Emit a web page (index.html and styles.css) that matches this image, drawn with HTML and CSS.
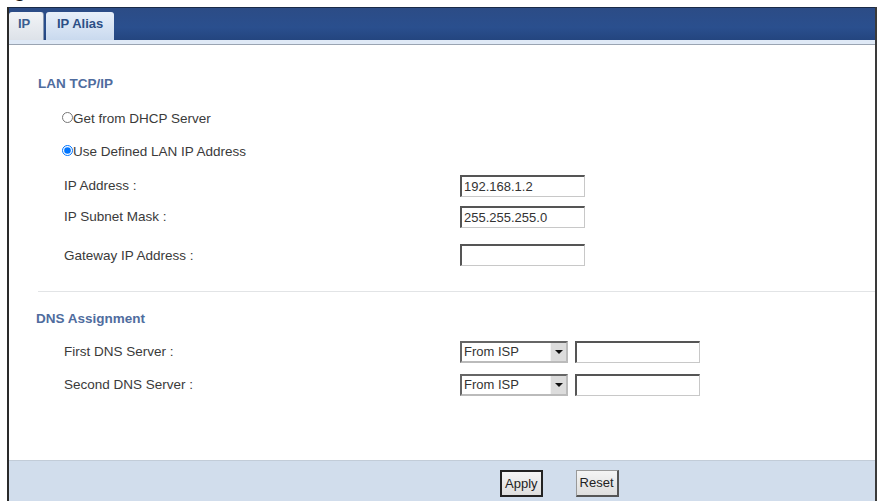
FILE: index.html
```html
<!DOCTYPE html>
<html lang="en">
<head>
  <meta charset="UTF-8" />
  <title>LAN - IP</title>
  <link rel="stylesheet" href="styles.css">
</head>
<body>
  <div class="caption">Figure 47 Network &gt; LAN &gt; IP</div>

  <div class="panel">
    <div class="tabbar">
      <a href="#" class="tab active">IP</a>
      <a href="#" class="tab">IP Alias</a>
    </div>
    <div class="tab-strip"></div>

    <form class="content">
      <h3 class="section-title">LAN TCP/IP</h3>
      <div class="row radio-row">
        <label><input type="radio" name="lanip" value="dhcp">Get from DHCP Server</label>
      </div>
      <div class="row radio-row">
        <label><input type="radio" name="lanip" value="static" checked>Use Defined LAN IP Address</label>
      </div>
      <div class="row field-row ip">
        <span class="label">IP Address :</span>
        <input type="text" class="text-box" value="192.168.1.2">
      </div>
      <div class="row field-row">
        <span class="label">IP Subnet Mask :</span>
        <input type="text" class="text-box" value="255.255.255.0">
      </div>
      <div class="row field-row gateway">
        <span class="label">Gateway IP Address :</span>
        <input type="text" class="text-box" value="">
      </div>

      <hr class="divider">

      <h3 class="section-title dns">DNS Assignment</h3>
      <div class="row field-row dns-row">
        <span class="label">First DNS Server :</span>
        <div class="select-box"><span>From ISP</span><i class="arrow"></i></div>
        <input type="text" class="text-box dns-box" value="">
      </div>
      <div class="row field-row dns-row">
        <span class="label">Second DNS Server :</span>
        <div class="select-box"><span>From ISP</span><i class="arrow"></i></div>
        <input type="text" class="text-box dns-box" value="">
      </div>
    </form>

    <div class="footer">
      <button type="button" class="btn apply">Apply</button>
      <button type="button" class="btn">Reset</button>
    </div>
  </div>
</body>
</html>
```

FILE: styles.css
```css
body {
  margin: 0;
  padding: 0;
  background-color: #ffffff;
  font-family: Arial, "Liberation Sans", sans-serif;
  overflow: hidden;
}

/* figure caption, sits mostly above the page edge */
.caption {
  height: 7px;
  margin-left: -4px;
  font-size: 20px;
  line-height: 7px;
  font-weight: bold;
  color: #111;
  position: relative;
  top: -13px;
}

.panel {
  margin-left: 7px;
  width: 866px;
  height: 494px;
  border-left: 2px solid #2a2a2a;
  border-right: 2px solid #3a3a3a;
  display: flex;
  flex-direction: column;
}

/* dark blue tab header */
.tabbar {
  height: 32px;
  border-top: 1px solid #1a2a48;
  background: linear-gradient(#2c4c86, #2a4f8e 60%, #24457f);
  display: flex;
  align-items: flex-end;
  gap: 2px;
}

.tab {
  height: 28px;
  padding: 0 11px;
  font-size: 13px;
  font-weight: bold;
  line-height: 24px;
  color: #2c4f86;
  text-decoration: none;
  border-radius: 3px 3px 0 0;
  background: linear-gradient(#e8f0fa, #c9d9ee);
}

.tab.active {
  width: 15px;
  padding: 0 10px 0 9px;
  background: linear-gradient(#f2f4f7, #dde2e9);
  color: #3b5d90;
  border-right: 1px solid #8898b0;
}

.tab-strip {
  height: 4px;
  background: #dfe9f6;
  border-bottom: 1px solid #9aa4b2;
}

.content {
  flex: 1;
  padding: 31px 0 0 29px;
  font-size: 13.5px;
  color: #3a3a3a;
}

.section-title {
  margin: 0 0 11px 0;
  font-size: 13.5px;
  font-weight: bold;
  color: #4f6c9e;
}

.section-title.dns {
  margin: 19px 0 9px -2px;
}

.row {
  display: flex;
  align-items: center;
  padding-left: 26px;
}

.radio-row {
  height: 33px;
}

.radio-row input {
  margin: 0 0 0 -2px;
  width: 11px;
  height: 11px;
}

.field-row {
  height: 31px;
}

.field-row.ip {
  margin-top: 2px;
}

.field-row.gateway {
  height: 44px;
  padding-top: 2px;
  box-sizing: border-box;
}

.field-row.dns-row {
  height: 33px;
}

.label {
  width: 396px;
}

.text-box {
  width: 118px;
  height: 17px;
  padding: 1px 2px;
  font-family: Arial, "Liberation Sans", sans-serif;
  font-size: 13px;
  color: #333;
  border: 1px solid #c8c8c8;
  border-top: 2px solid #555;
  border-left: 2px solid #555;
}

.divider {
  margin: 15px 0 0 0;
  border: 0;
  border-top: 1px solid #e2e4e6;
}

.select-box {
  width: 108px;
  height: 22px;
  border: 2px solid #666;
  border-right-color: #bbb;
  border-bottom-color: #bbb;
  display: flex;
  align-items: center;
  justify-content: space-between;
  font-size: 13px;
  color: #333;
  padding-left: 2px;
  margin-right: 7px;
  box-sizing: border-box;
}

.arrow {
  width: 15px;
  height: 18px;
  background: #dcdcdc;
  border-left: 1px solid #f4f4f4;
  position: relative;
}

.arrow::after {
  content: "";
  position: absolute;
  left: 4px;
  top: 7px;
  border-left: 4px solid transparent;
  border-right: 4px solid transparent;
  border-top: 4px solid #111;
}

.dns-box {
  width: 118px;
}

.footer {
  height: 40px;
  border-top: 1px solid #c2ccd8;
  background: #d1ddec;
  display: flex;
  align-items: center;
  padding-left: 491px;
  gap: 33px;
}

.btn {
  height: 27px;
  padding: 0 3px;
  margin-top: 4px;
  font-family: Arial, "Liberation Sans", sans-serif;
  font-size: 13px;
  color: #222;
  background: linear-gradient(#f4f4f4, #dedede);
  border: 1px solid #999;
  border-right: 2px solid #555;
  border-bottom: 2px solid #555;
}

.btn.apply {
  border: 2px solid #222;
}
```
